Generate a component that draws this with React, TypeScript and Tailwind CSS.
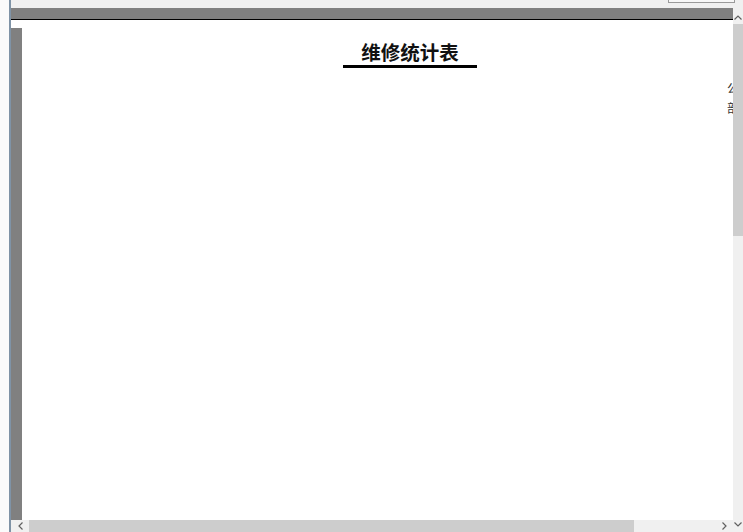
import React from "react";

function UpArrow() {
  return (
    <svg width="8" height="5" viewBox="0 0 8 5"><path d="M0.5 4.5 L4 1 L7.5 4.5" fill="none" stroke="#606060" strokeWidth="1.2" /></svg>
  );
}
function DownArrow() {
  return (
    <svg width="8" height="5" viewBox="0 0 8 5"><path d="M0.5 0.5 L4 4 L7.5 0.5" fill="none" stroke="#606060" strokeWidth="1.2" /></svg>
  );
}
function LeftArrow() {
  return (
    <svg width="5" height="8" viewBox="0 0 5 8"><path d="M4.5 0.5 L1 4 L4.5 7.5" fill="none" stroke="#606060" strokeWidth="1.2" /></svg>
  );
}
function RightArrow() {
  return (
    <svg width="5" height="8" viewBox="0 0 5 8"><path d="M0.5 0.5 L4 4 L0.5 7.5" fill="none" stroke="#606060" strokeWidth="1.2" /></svg>
  );
}

export default function App() {
  return (
    <div
      className="w-[743px] h-[532px] flex overflow-hidden bg-[#f0f0f0]"
      style={{ fontFamily: '"Noto Sans CJK SC", "Liberation Sans", sans-serif' }}
    >
      <div className="w-[9px] h-full bg-[#fbfbfb]" />
      <div className="w-[2px] h-full bg-[#7f93a6]" />
      <div className="flex-1 flex flex-col min-w-0">
        {/* top toolbar remnant */}
        <div className="h-[8px] flex bg-[#f0f0f0]">
          <div className="ml-[657px] w-[67px] h-[3px] border border-t-0 border-[#9a9a9a] bg-[#f7f7f7]" />
        </div>
        <div className="flex flex-1 min-h-0">
          <div className="flex-1 flex flex-col min-w-0">
            <div className="h-[11px] bg-[#808080]" />
            <div className="h-[1px] bg-black" />
            <div className="flex-1 flex min-h-0 bg-white">
              <div className="w-[11px] mt-[8px] bg-[#808080]" />
              <div className="flex-1 overflow-hidden">
                <div className="w-[776px] flex flex-col">
                  <div className="flex justify-center pt-[20px]">
                    <span className="text-[19.5px] leading-[24px] font-bold text-[#111] border-b-[3px] border-black px-[18px] pb-[1px]">
                      维修统计表
                    </span>
                  </div>
                  <div className="ml-[705px] mt-[14px] flex flex-col gap-[8px] text-[12px] leading-[12px] text-[#333] whitespace-nowrap">
                    <span>公司名称：</span>
                    <span>部门名称：</span>
                  </div>
                </div>
              </div>
            </div>
            {/* horizontal scrollbar */}
            <div className="h-[12px] flex items-center bg-[#f0f0f0]">
              <div className="w-[18px] flex justify-center"><LeftArrow /></div>
              <div className="w-[605px] h-full bg-[#cdcdcd]" />
              <div className="flex-1" />
              <div className="w-[18px] flex justify-center"><RightArrow /></div>
            </div>
          </div>
          {/* vertical scrollbar */}
          <div className="w-[10px] flex flex-col bg-[#f0f0f0] pt-[2px]">
            <div className="h-[14px] flex items-center justify-center"><UpArrow /></div>
            <div className="h-[212px] bg-[#cdcdcd]" />
            <div className="flex-1" />
            <div className="h-[16px] flex items-center justify-center"><DownArrow /></div>
          </div>
        </div>
      </div>
    </div>
  );
}
